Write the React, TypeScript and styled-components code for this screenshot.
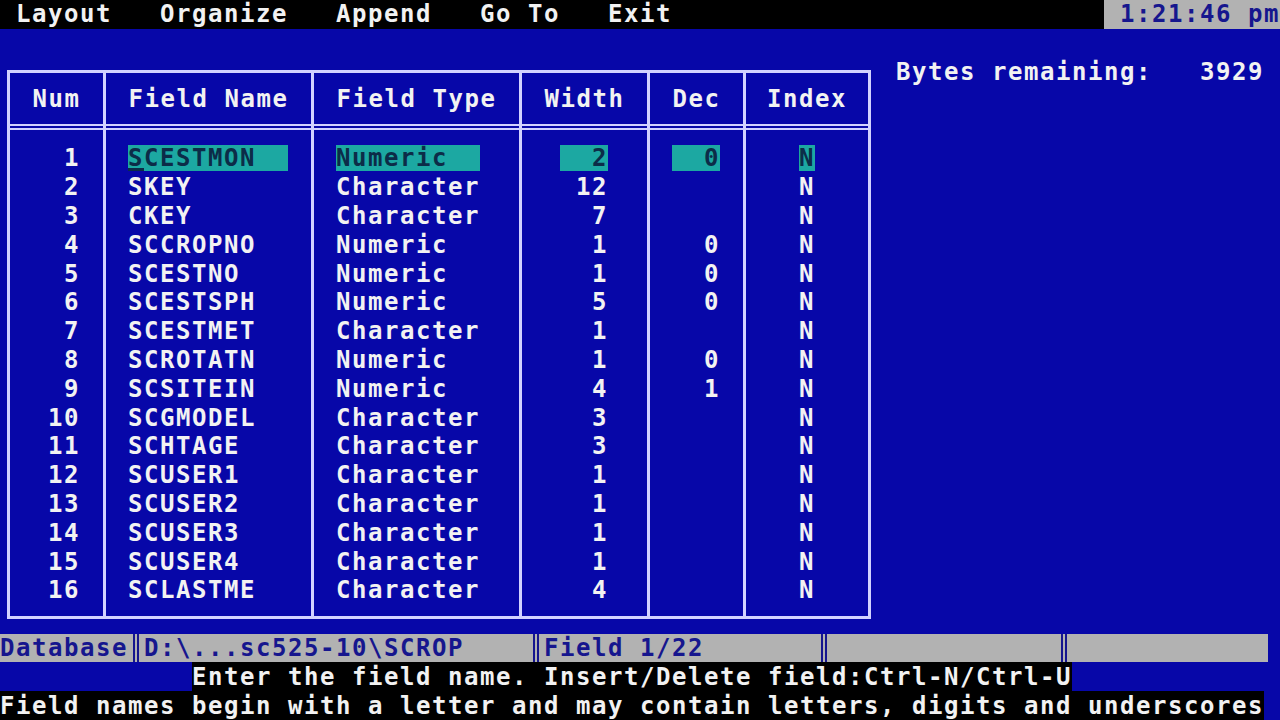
import React from 'react';
import styled, { createGlobalStyle } from 'styled-components';

const CH = 16;
const ROW = 28.8;
const BLUE = '#0707a8';
const LINE = '#d2d2ff';
const TEXT = '#f2f2f2';
const GREY = '#b2b2b2';
const NAVY = '#16168e';
const CYAN = '#1ca8a2';
const DARK = '#0c2c48';

const Global = createGlobalStyle`
  html, body { margin: 0; padding: 0; background: ${BLUE}; }
  body {
    font-family: "DejaVu Sans Mono", "Liberation Mono", monospace;
    font-weight: bold;
    font-size: 24px;
    letter-spacing: 1.55px;
    color: ${TEXT};
  }
`;

const Screen = styled.div`
  width: 1280px;
  height: 720px;
  overflow: hidden;
  background: ${BLUE};
  display: flex;
  flex-direction: column;
  white-space: pre;
`;

const MenuBar = styled.div`
  height: ${ROW}px;
  display: flex;
  background: #000;
`;

const MenuItems = styled.div`
  flex: 1;
  display: flex;
  align-items: center;
  gap: ${3 * CH}px;
  padding-left: ${CH}px;
`;

const MenuItem = styled.span`
  color: ${TEXT};
`;

const Clock = styled.div`
  width: ${11 * CH}px;
  box-sizing: border-box;
  padding-left: ${CH}px;
  background: ${GREY};
  color: ${NAVY};
  display: flex;
  align-items: center;
`;

const BlankRow = styled.div`
  height: ${ROW}px;
`;

const Main = styled.div`
  height: ${20 * ROW}px;
  display: flex;
  align-items: flex-start;
  padding-left: 7px;
`;

const TableBox = styled.div`
  margin-top: ${ROW / 2 - 1.5}px;
  border: 3px solid ${LINE};
  display: flex;
`;

const Column = styled.div<{ $w: number; $last?: boolean }>`
  width: ${(p) => p.$w}px;
  box-sizing: border-box;
  border-right: ${(p) => (p.$last ? 'none' : `3px solid ${LINE}`)};
  display: flex;
  flex-direction: column;
`;

const HeaderCell = styled.div`
  height: 51px;
  border-bottom: 6px double ${LINE};
  display: flex;
  align-items: center;
  justify-content: center;
`;

const Body = styled.div`
  padding-top: 13.5px;
  padding-bottom: 11px;
  display: flex;
  flex-direction: column;
`;

const Cell = styled.div<{ $align: 'left' | 'right' | 'center'; $pl?: number; $pr?: number }>`
  height: ${ROW}px;
  display: flex;
  align-items: center;
  justify-content: ${(p) =>
    p.$align === 'left' ? 'flex-start' : p.$align === 'right' ? 'flex-end' : 'center'};
  padding-left: ${(p) => p.$pl ?? 0}px;
  padding-right: ${(p) => p.$pr ?? 0}px;
`;

const Highlight = styled.span<{ $chars: number; $align: 'left' | 'right' }>`
  display: inline-block;
  width: ${(p) => p.$chars * CH}px;
  height: 26px;
  line-height: 26px;
  background: ${CYAN};
  color: ${DARK};
  text-align: ${(p) => p.$align};
`;

const Cursor = styled.span`
  display: inline-block;
  height: 26px;
  box-shadow: inset 0 -3px 0 ${DARK};
`;

const Bytes = styled.div`
  margin-left: 25px;
  height: ${ROW}px;
  display: flex;
  align-items: center;
  gap: ${3 * CH}px;
`;

const StatusBar = styled.div`
  height: ${ROW}px;
  display: flex;
`;

const Segment = styled.div<{ $cols: number }>`
  width: ${(p) => p.$cols * CH}px;
  background: ${GREY};
  color: ${NAVY};
  display: flex;
  align-items: center;
  overflow: hidden;
`;

const Sep = styled.div`
  width: ${CH}px;
  background: ${GREY};
  display: flex;
  justify-content: center;
  &::before {
    content: '';
    width: 2px;
    border-left: 2px solid ${NAVY};
    border-right: 2px solid ${NAVY};
  }
`;

const HintRow = styled.div<{ $indent: number }>`
  height: ${ROW}px;
  display: flex;
  padding-left: ${(p) => p.$indent * CH}px;
`;

const BlackText = styled.div<{ $cols: number }>`
  width: ${(p) => p.$cols * CH}px;
  background: #000;
  color: ${TEXT};
  display: flex;
  align-items: center;
`;

type Field = { name: string; type: string; width: string; dec: string; index: string };

const fields: Field[] = [
  { name: 'SCESTMON', type: 'Numeric', width: '2', dec: '0', index: 'N' },
  { name: 'SKEY', type: 'Character', width: '12', dec: '', index: 'N' },
  { name: 'CKEY', type: 'Character', width: '7', dec: '', index: 'N' },
  { name: 'SCCROPNO', type: 'Numeric', width: '1', dec: '0', index: 'N' },
  { name: 'SCESTNO', type: 'Numeric', width: '1', dec: '0', index: 'N' },
  { name: 'SCESTSPH', type: 'Numeric', width: '5', dec: '0', index: 'N' },
  { name: 'SCESTMET', type: 'Character', width: '1', dec: '', index: 'N' },
  { name: 'SCROTATN', type: 'Numeric', width: '1', dec: '0', index: 'N' },
  { name: 'SCSITEIN', type: 'Numeric', width: '4', dec: '1', index: 'N' },
  { name: 'SCGMODEL', type: 'Character', width: '3', dec: '', index: 'N' },
  { name: 'SCHTAGE', type: 'Character', width: '3', dec: '', index: 'N' },
  { name: 'SCUSER1', type: 'Character', width: '1', dec: '', index: 'N' },
  { name: 'SCUSER2', type: 'Character', width: '1', dec: '', index: 'N' },
  { name: 'SCUSER3', type: 'Character', width: '1', dec: '', index: 'N' },
  { name: 'SCUSER4', type: 'Character', width: '1', dec: '', index: 'N' },
  { name: 'SCLASTME', type: 'Character', width: '4', dec: '', index: 'N' },
];

export default function App() {
  return (
    <>
      <Global />
      <Screen>
        <MenuBar>
          <MenuItems>
            <MenuItem>Layout</MenuItem>
            <MenuItem>Organize</MenuItem>
            <MenuItem>Append</MenuItem>
            <MenuItem>Go To</MenuItem>
            <MenuItem>Exit</MenuItem>
          </MenuItems>
          <Clock>1:21:46 pm</Clock>
        </MenuBar>
        <BlankRow />
        <Main>
          <TableBox>
            <Column $w={96}>
              <HeaderCell>Num</HeaderCell>
              <Body>
                {fields.map((f, i) => (
                  <Cell key={i} $align="right" $pr={23}>
                    {i + 1}
                  </Cell>
                ))}
              </Body>
            </Column>
            <Column $w={208}>
              <HeaderCell>Field Name</HeaderCell>
              <Body>
                {fields.map((f, i) => (
                  <Cell key={i} $align="left" $pl={22}>
                    {i === 0 ? (
                      <Highlight $chars={10} $align="left">
                        <Cursor>{f.name[0]}</Cursor>
                        {f.name.slice(1)}
                      </Highlight>
                    ) : (
                      f.name
                    )}
                  </Cell>
                ))}
              </Body>
            </Column>
            <Column $w={208}>
              <HeaderCell>Field Type</HeaderCell>
              <Body>
                {fields.map((f, i) => (
                  <Cell key={i} $align="left" $pl={22}>
                    {i === 0 ? (
                      <Highlight $chars={9} $align="left">
                        {f.type}
                      </Highlight>
                    ) : (
                      f.type
                    )}
                  </Cell>
                ))}
              </Body>
            </Column>
            <Column $w={128}>
              <HeaderCell>Width</HeaderCell>
              <Body>
                {fields.map((f, i) => (
                  <Cell key={i} $align="right" $pr={39}>
                    {i === 0 ? (
                      <Highlight $chars={3} $align="right">
                        {f.width}
                      </Highlight>
                    ) : (
                      f.width
                    )}
                  </Cell>
                ))}
              </Body>
            </Column>
            <Column $w={96}>
              <HeaderCell>Dec</HeaderCell>
              <Body>
                {fields.map((f, i) => (
                  <Cell key={i} $align="right" $pr={23}>
                    {i === 0 ? (
                      <Highlight $chars={3} $align="right">
                        {f.dec}
                      </Highlight>
                    ) : (
                      f.dec
                    )}
                  </Cell>
                ))}
              </Body>
            </Column>
            <Column $w={122} $last>
              <HeaderCell>Index</HeaderCell>
              <Body>
                {fields.map((f, i) => (
                  <Cell key={i} $align="center">
                    {i === 0 ? (
                      <Highlight $chars={1} $align="left">
                        {f.index}
                      </Highlight>
                    ) : (
                      f.index
                    )}
                  </Cell>
                ))}
              </Body>
            </Column>
          </TableBox>
          <Bytes>
            <span>Bytes remaining:</span>
            <span>3929</span>
          </Bytes>
        </Main>
        <StatusBar>
          <Segment $cols={8}>Database</Segment>
          <Sep />
          <Segment $cols={24}>D:\...sc525-10\SCROP</Segment>
          <Sep />
          <Segment $cols={17}>Field 1/22</Segment>
          <Sep />
          <Segment $cols={14} />
          <Sep />
          <Segment $cols={12.25} />
        </StatusBar>
        <HintRow $indent={12}>
          <BlackText $cols={55}>Enter the field name. Insert/Delete field:Ctrl-N/Ctrl-U</BlackText>
        </HintRow>
        <HintRow $indent={0}>
          <BlackText $cols={79}>Field names begin with a letter and may contain letters, digits and underscores</BlackText>
        </HintRow>
      </Screen>
    </>
  );
}
